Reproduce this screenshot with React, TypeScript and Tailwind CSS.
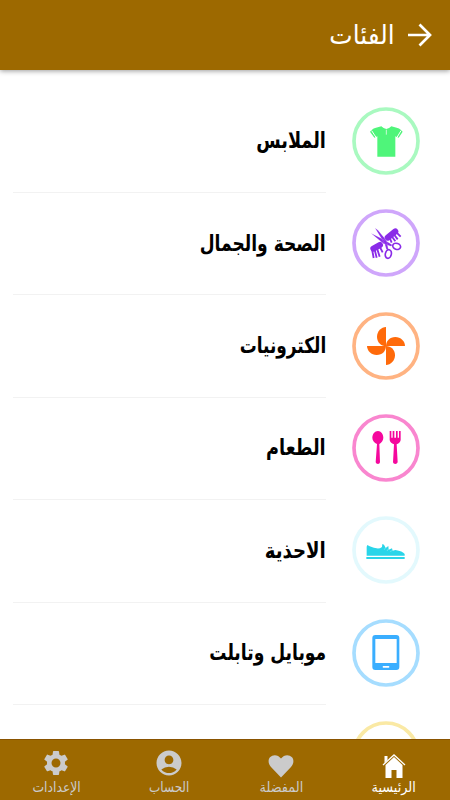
import type { ReactNode } from 'react'
import { MdAccountCircle, MdSettings } from 'react-icons/md'

interface Category {
  name: string
  ring: string
  color: string
  textClass: string
  icon: ReactNode
}

const blade = 'M102 102H45C45 116 58 129 74 129C91 129 102 117 102 102Z'

const categories: Category[] = [
  {
    name: 'الملابس',
    ring: '#a9f9c0',
    color: '#4ff57a',
    textClass: 'scale-x-[0.895]',
    icon: (
      <>
        <path d="M72 62L88 58Q94 65 103 66Q112 65 118 58L134 62Q142 64 146 68L152 74L140 92L130 88V149H76V88L67 92L54 74L60 68Q64 64 72 62Z" />
        <path d="M59 71L72 91M147 71L135 91" stroke="#fff" strokeWidth="3" />
        <path d="M103 68V83" stroke="#c9fbd5" strokeWidth="3" />
      </>
    ),
  },
  {
    name: 'الصحة والجمال',
    ring: '#cfa6fb',
    color: '#8a2be8',
    textClass: 'scale-x-[0.865]',
    icon: (
      <>
        <g fill="none" stroke="#8a2be8">
          <path d="M64 119L84 108M107 86L130 67" strokeWidth="18" strokeLinecap="round" />
          <path
            d="M60 120L65 147M67 118L74 146M74 115L83 143M82 111L92 130M112 84L119 101M118 80L130 97M125 75L137 91M132 69L146 83"
            strokeWidth="5.5"
          />
        </g>
        <path d="M57 73L99 94L121 108L117 112L95 104ZM69 57L78 64L104 95L109 122L103 121L98 104Z" stroke="#fff" strokeWidth="0.5" />
        <ellipse cx="134" cy="112" rx="12" ry="9" fill="none" stroke="#8a2be8" strokeWidth="5" transform="rotate(18 134 112)" />
        <ellipse cx="109" cy="135" rx="9" ry="13" fill="none" stroke="#8a2be8" strokeWidth="5" transform="rotate(12 109 135)" />
      </>
    ),
  },
  {
    name: 'الكترونيات',
    ring: '#ffb382',
    color: '#ff6a0a',
    textClass: 'scale-x-[0.855]',
    icon: (
      <>
        <path d={blade} />
        <path d={blade} transform="rotate(90 102 102)" />
        <path d={blade} transform="rotate(180 102 102)" />
        <path d={blade} transform="rotate(270 102 102)" />
      </>
    ),
  },
  {
    name: 'الطعام',
    ring: '#f986cf',
    color: '#f5089d',
    textClass: 'scale-x-[0.895]',
    icon: (
      <>
        <path d="M78 51C87 51 94 61 94 71C94 80 88 86 82 90L84 145Q83 150 78 150Q72 150 71 145L75 90C67 86 61 80 61 71C61 61 68 51 78 51Z" />
        <path d="M113 51H118V71H122V51H127V71H132V51H137V71H141V51H146V78Q145 86 134 91L137 145Q135 150 130 150Q124 150 123 145L126 91Q114 86 113 78Z" />
      </>
    ),
  },
  {
    name: 'الاحذية',
    ring: '#e3f9fd',
    color: '#29d5e9',
    textClass: 'scale-x-[0.915]',
    icon: (
      <>
        <path d="M46 87L53 91Q69 99 84 97L90 93L91 84L96 86L101 96L109 90L110 101L120 97L122 104L130 102Q152 105 158 114V119H44V92Z" />
        <path d="M43 123H158V129H43Z" />
        <path d="M101 95L97 101M109 99L105 105M120 103L115 108" stroke="#8aeaf4" strokeWidth="2" />
      </>
    ),
  },
  {
    name: 'موبايل وتابلت',
    ring: '#a6ddff',
    color: '#3aaeff',
    textClass: 'scale-x-[0.865]',
    icon: (
      <>
        <rect x="61" y="48" width="81" height="105" rx="9" />
        <rect x="70" y="60" width="64" height="72" fill="#fff" />
        <rect x="92" y="141" width="20" height="5" rx="2" fill="#fff" />
      </>
    ),
  },
  { name: '', ring: '#fae9a4', color: '#f5cf3f', textClass: '', icon: null },
]

const tabs = [
  {
    label: 'الرئيسية',
    active: true,
    textClass: 'scale-x-[1.02]',
    icon: (
      <svg width="26" height="26" viewBox="0 0 26 26" fill="currentColor">
        <path d="M3.5 4H6.5V8L3.5 11ZM4.5 13L13 5L21.5 13V26H15.5V18H10.5V26H4.5Z" />
        <path d="M2 13L13 3L24 13" fill="none" stroke="currentColor" strokeWidth="1.3" />
      </svg>
    ),
  },
  {
    label: 'المفضلة',
    active: false,
    textClass: 'scale-x-[1.02]',
    icon: (
      <svg width="26" height="26" viewBox="0 0 26 26" fill="currentColor">
        <path d="M13 25.5L3 15C0 11.5 0 7.5 2 5.3C5 2 10 2.5 13 6.5C16 2.5 21 2 24 5.3C26 7.5 26 11.5 23 15Z" />
      </svg>
    ),
  },
  { label: 'الحساب', active: false, textClass: 'scale-x-[0.95]', icon: <MdAccountCircle size={30} /> },
  { label: 'الإعدادات', active: false, textClass: 'scale-x-[0.98]', icon: <MdSettings size={30} /> },
]

function CategoryRow({ category }: { category: Category }) {
  return (
    <li className="flex h-[102.4px] shrink-0 items-center pr-[30px] pl-[13px]">
      <svg className="mb-[1.8px] size-[68px] shrink-0" viewBox="0 0 204 204" fill={category.color}>
        <circle cx="102" cy="102" r="96" fill="#fff" stroke={category.ring} strokeWidth="11" />
        {category.icon}
      </svg>
      <div className="mr-[26px] flex h-full flex-1 items-center border-b border-[#f2f2f2] pb-px">
        <span className={`origin-right text-[22px] font-bold whitespace-nowrap text-black ${category.textClass}`}>
          {category.name}
        </span>
      </div>
    </li>
  )
}

export default function App() {
  return (
    <div
      dir="rtl"
      className="flex h-[800px] w-[450px] flex-col overflow-hidden bg-white font-['DejaVu_Sans_Condensed','DejaVu_Sans',sans-serif]"
    >
      <header className="z-10 flex h-[70px] shrink-0 items-center bg-[#9d6900] pr-[18px] text-white shadow-[0_1px_5px_rgba(0,0,0,0.4)]">
        <svg width="25" height="24" viewBox="0 0 25 24" fill="none" stroke="currentColor" strokeWidth="2.7">
          <path d="M1 12H23M12.5 1.5L23 12L12.5 22.5" />
        </svg>
        <h1 className="mr-3 origin-right scale-x-[1.06] text-[26px] whitespace-nowrap">الفئات</h1>
      </header>

      <ul className="flex min-h-0 flex-1 flex-col overflow-hidden pt-[20.6px]">
        {categories.map((category, i) => (
          <CategoryRow key={i} category={category} />
        ))}
      </ul>

      <nav className="z-10 grid h-[61px] shrink-0 grid-cols-4 border-t border-[#8a5300] bg-[#9d6900]">
        {tabs.map((tab) => (
          <div
            key={tab.label}
            className={`flex flex-col items-center pt-[7px] ${tab.active ? 'text-white' : 'text-[#cbcbcb]'}`}
          >
            <div className="flex h-[31px] items-end">{tab.icon}</div>
            <span className={`text-[14px] leading-[18px] whitespace-nowrap ${tab.textClass}`}>{tab.label}</span>
          </div>
        ))}
      </nav>
    </div>
  )
}
